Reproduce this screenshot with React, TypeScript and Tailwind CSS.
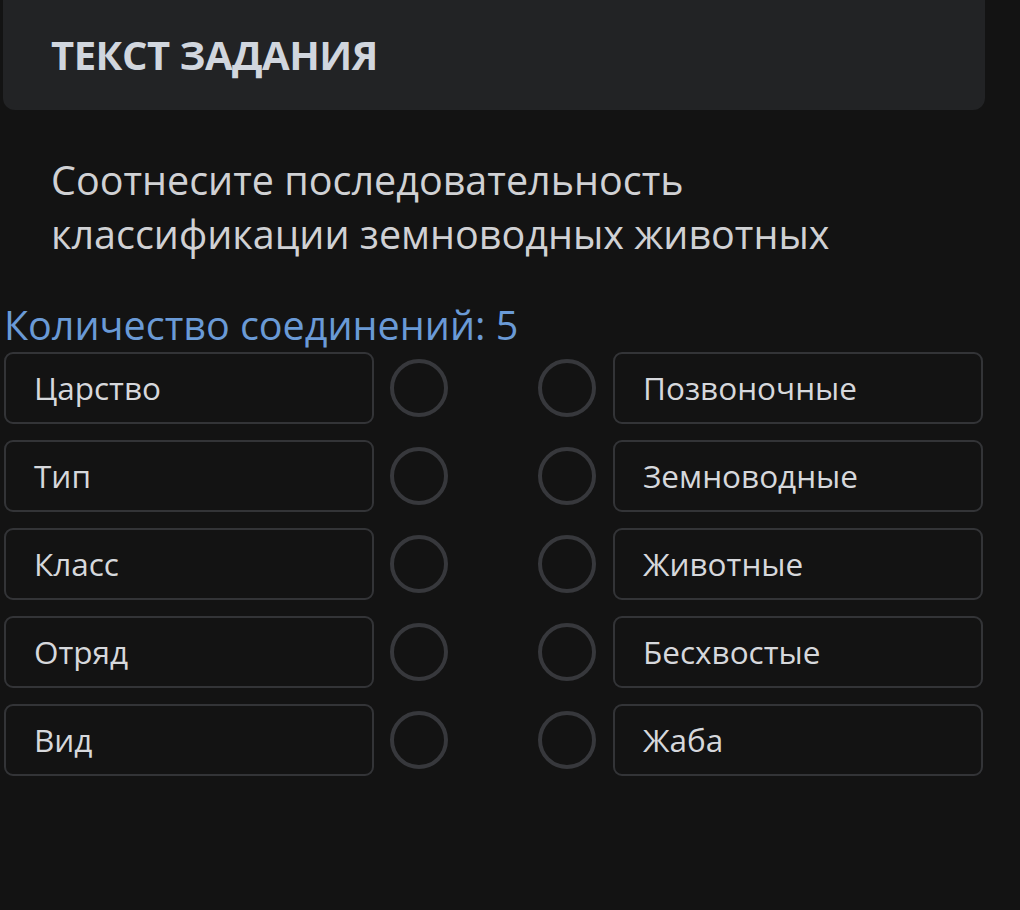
const rows = [
  ["Царство", "Позвоночные"],
  ["Тип", "Земноводные"],
  ["Класс", "Животные"],
  ["Отряд", "Бесхвостые"],
  ["Вид", "Жаба"],
]

function Dot() {
  return <div className="w-[58px] h-[58px] shrink-0 rounded-full border-[4px] border-[#37383c]" />
}

function Cell({ text }: { text: string }) {
  return (
    <div className="w-[370px] h-[72px] shrink-0 flex items-center pl-[28px] rounded-[9px] border-2 border-[#333437] text-[31.5px] text-[#d6d8dc]">
      {text}
    </div>
  )
}

export default function App() {
  return (
    <div className="w-[1020px] h-[910px] bg-[#131313] overflow-hidden font-['Open_Sans','Noto_Sans',sans-serif]">
      <div className="ml-[3px] w-[982px] h-[110px] bg-[#222325] rounded-b-[12px] flex items-center pl-[48px]">
        <h1 className="text-[40px] font-bold tracking-[-0.5px] text-[#d1d6de]">ТЕКСТ ЗАДАНИЯ</h1>
      </div>

      <p className="mt-[43px] ml-[51px] text-[39.5px] leading-[54px] text-[#d0d1d4]">
        Соотнесите последовательность
        <br />
        классификации земноводных животных
      </p>

      <div className="mt-[42px] ml-[4px] text-[39.5px] leading-[44px] text-[#6a9ad6]">
        Количество соединений: 5
      </div>

      <div className="mt-[5px] ml-[4px] flex flex-col gap-[16px]">
        {rows.map(([left, right]) => (
          <div key={left} className="flex items-center">
            <Cell text={left} />
            <div className="ml-[16px]">
              <Dot />
            </div>
            <div className="ml-[90px]">
              <Dot />
            </div>
            <div className="ml-[17px]">
              <Cell text={right} />
            </div>
          </div>
        ))}
      </div>
    </div>
  )
}
